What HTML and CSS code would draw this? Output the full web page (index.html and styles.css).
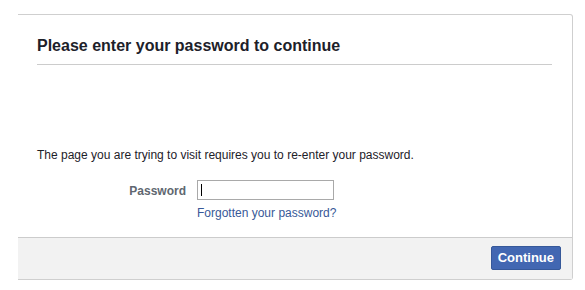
FILE: index.html
```html
<!DOCTYPE html>
<html>
<head>
<meta charset="utf-8">
<link rel="stylesheet" href="styles.css">
</head>
<body>
<div class="page">
  <div class="dialog">
    <div class="dialog-header">
      <h2 class="title">Please enter your password to continue</h2>
    </div>
    <div class="dialog-body">
      <p class="intro">The page you are trying to visit requires you to re-enter your password.</p>
      <div class="form-row">
        <label class="label" for="pw">Password</label>
        <div class="field">
          <span class="input-wrap"><input id="pw" class="input" type="password"></span>
          <a class="link" href="#">Forgotten your password?</a>
        </div>
      </div>
    </div>
    <div class="dialog-footer">
      <button class="btn" type="button">Continue</button>
    </div>
  </div>
</div>
</body>
</html>
```
FILE: styles.css
```css
html, body {
  margin: 0;
  padding: 0;
  background: #fff;
}
.page {
  padding: 14px 0 0 18px;
  font-family: "Liberation Sans", Arial, sans-serif;
  color: #1d2129;
}
.dialog {
  width: 554px;
  height: 264px;
  border: 1px solid #cfcfcf;
  border-left: none;
  border-radius: 0 3px 3px 0;
  display: flex;
  flex-direction: column;
  box-sizing: content-box;
}
.dialog-header {
  padding: 21px 20px 0 19px;
}
.title {
  margin: 0;
  font-size: 16px;
  line-height: 20px;
  font-weight: bold;
  color: #1d2129;
  padding-bottom: 8px;
  border-bottom: 1px solid #ccc;
}
.dialog-body {
  flex: 1;
  padding: 82px 19px 0 19px;
}
.intro {
  margin: 0;
  font-size: 12px;
  line-height: 16px;
}
.form-row {
  display: flex;
  margin-top: 17px;
}
.label {
  width: 149px;
  text-align: right;
  font-size: 12px;
  font-weight: bold;
  color: #606770;
  line-height: 20px;
  padding-right: 11px;
  padding-top: 1px;
}
.field {
  display: flex;
  flex-direction: column;
  align-items: flex-start;
}
.input-wrap {
  position: relative;
  display: block;
}
.input-wrap::after {
  content: "";
  position: absolute;
  left: 4px;
  top: 4px;
  width: 1px;
  height: 12px;
  background: #000;
}
.input {
  display: block;
  box-sizing: border-box;
  width: 137px;
  height: 20px;
  border: 1px solid #a9a9a9;
  padding: 0 3px;
  margin: 0;
  font-size: 12px;
  outline: none;
}
.link {
  margin-top: 5px;
  font-size: 12px;
  line-height: 16px;
  color: #385898;
  text-decoration: none;
}
.dialog-footer {
  height: 41px;
  border-top: 1px solid #ccc;
  background: #f2f2f2;
  display: flex;
  align-items: center;
  justify-content: flex-end;
  padding-right: 11px;
}
.btn {
  height: 24px;
  padding: 0 6px;
  border: 1px solid #365899;
  background: #4267b2;
  color: #fff;
  font-family: "Liberation Sans", Arial, sans-serif;
  font-size: 13px;
  font-weight: bold;
  border-radius: 2px;
  line-height: 22px;
  margin-bottom: 2px;
}
```
